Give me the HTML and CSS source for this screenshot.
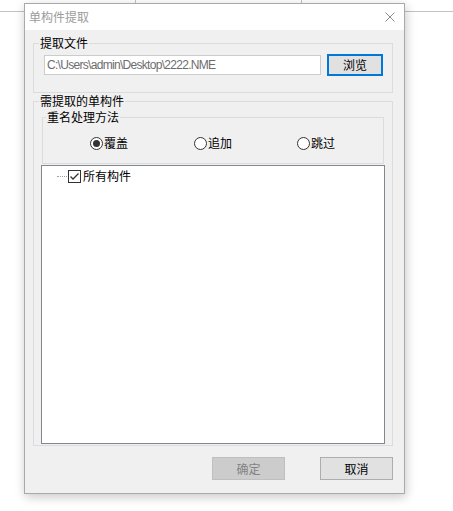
FILE: index.html
```html
<!DOCTYPE html>
<html lang="zh-CN">
<head>
<meta charset="utf-8">
<title>单构件提取</title>
<link rel="stylesheet" href="styles.css">
</head>
<body>
<div class="desk-line hline hl-left"></div>
<div class="desk-line hline hl-right"></div>
<div class="desk-line vline vl-1"></div>
<div class="desk-line vline vl-2"></div>

<div class="dialog">
  <div class="titlebar">
    <span class="title">单构件提取</span>
    <svg class="close" width="10" height="10" viewBox="0 0 10 10">
      <path d="M0.5 0.5 L9.5 9.5 M9.5 0.5 L0.5 9.5" stroke="#8c8c8c" stroke-width="1" fill="none"/>
    </svg>
  </div>
  <div class="content">
    <fieldset class="group g1">
      <legend>提取文件</legend>
      <div class="file-row">
        <div class="path">C:\Users\admin\Desktop\2222.NME</div>
        <button class="btn btn-focus">浏览</button>
      </div>
    </fieldset>

    <fieldset class="group g2">
      <legend>需提取的单构件</legend>
      <fieldset class="group g3">
        <legend>重名处理方法</legend>
        <div class="radios">
          <div class="radio">
            <svg width="13" height="13" viewBox="0 0 13 13"><circle cx="6.5" cy="6.5" r="6" fill="#fff" stroke="#333"/><circle cx="6.5" cy="6.5" r="3.5" fill="#333"/></svg>
            <span>覆盖</span>
          </div>
          <div class="radio">
            <svg width="13" height="13" viewBox="0 0 13 13"><circle cx="6.5" cy="6.5" r="6" fill="#fff" stroke="#333"/></svg>
            <span>追加</span>
          </div>
          <div class="radio">
            <svg width="13" height="13" viewBox="0 0 13 13"><circle cx="6.5" cy="6.5" r="6" fill="#fff" stroke="#333"/></svg>
            <span>跳过</span>
          </div>
        </div>
      </fieldset>
      <div class="tree">
        <div class="tree-item">
          <span class="dots"></span>
          <svg class="check" width="13" height="13" viewBox="0 0 13 13"><rect x="0.5" y="0.5" width="12" height="12" fill="#fff" stroke="#333"/><path d="M2.5 6.5 L5 9 L10.5 3.5" fill="none" stroke="#333" stroke-width="1.3"/></svg>
          <span class="label">所有构件</span>
        </div>
      </div>
    </fieldset>

    <div class="actions">
      <button class="btn btn-disabled">确定</button>
      <button class="btn">取消</button>
    </div>
  </div>
</div>
</body>
</html>
```

FILE: styles.css
```css
* { box-sizing: border-box; }

html, body {
  margin: 0;
  padding: 0;
  background: #ffffff;
}

body {
  position: relative;
  width: 453px;
  height: 511px;
  overflow: hidden;
  font-family: "Noto Sans CJK SC", "Noto Sans", sans-serif;
  font-size: 12px;
  color: #000;
}

.desk-line {
  position: absolute;
  background: #c2c2c2;
}
.hline { height: 1px; top: 11px; }
.hl-left { left: 0; width: 24px; }
.hl-right { left: 405px; width: 48px; }
.vline { width: 1px; top: 0; height: 3px; }
.vl-1 { left: 135px; }
.vl-2 { left: 301px; }

.dialog {
  position: relative;
  margin: 3px 0 0 24px;
  width: 381px;
  height: 491px;
  border: 1px solid #a9a9a9;
  background: #f0f0f0;
  box-shadow: 1px 3px 10px rgba(0, 0, 0, 0.22);
  display: flex;
  flex-direction: column;
}

.titlebar {
  height: 26px;
  background: #ffffff;
  display: flex;
  align-items: center;
  justify-content: space-between;
  padding: 0 9px 0 4px;
  flex: none;
}
.title {
  color: #9b9b9b;
  font-size: 12px;
  line-height: 16px;
}
.close { display: block; }

.content {
  padding: 0 11px 0 8px;
  display: flex;
  flex-direction: column;
}

.group {
  margin: 0;
  border: 1px solid #dcdcdc;
  min-width: 0;
}
.group > legend {
  font-size: 12px;
  line-height: 16px;
  padding: 0 1px;
  margin-left: 5px;
}

.g1 {
  margin-top: 5px;
  width: 360px;
  padding: 3px 9px 16px 0;
}
.file-row {
  display: flex;
  align-items: center;
  gap: 6px;
  margin-left: 10px;
}
.path {
  width: 277px;
  height: 20px;
  background: #fff;
  border: 1px solid #cccccc;
  color: #6d6d6d;
  font-family: "Liberation Sans", "Noto Sans CJK SC", sans-serif;
  font-size: 12px;
  letter-spacing: -0.7px;
  line-height: 18px;
  padding-left: 2px;
  white-space: nowrap;
  overflow: hidden;
}

.btn {
  font-family: "Noto Sans CJK SC", sans-serif;
  font-size: 12px;
  line-height: 16px;
  width: 73px;
  height: 23px;
  padding: 0;
  margin: 0;
  border: 1px solid #adadad;
  background: #e1e1e1;
  color: #000;
  text-align: center;
}
.btn-focus {
  width: 56px;
  height: 22px;
  border: 2px solid #0078d7;
}
.btn-disabled {
  background: #cccccc;
  border-color: #bfbfbf;
  color: #838383;
}

.g2 {
  width: 360px;
  padding: 0 7px 1px 0;
}

.g3 {
  margin: 0 1px 0 8px;
  padding: 10px 0 12px 0;
}
.g3 > legend { margin-left: 3px; }

.radios {
  display: grid;
  grid-template-columns: 104px 103px auto;
  height: 16px;
  margin-left: 47px;
}
.radio {
  display: flex;
  align-items: center;
  gap: 1px;
  line-height: 16px;
}
.radio svg { display: block; }

.tree {
  margin: 1px 0 0 7px;
  height: 279px;
  background: #fff;
  border: 1px solid #828790;
  padding: 2px 0 0 15px;
}
.tree-item {
  display: flex;
  align-items: center;
  height: 16px;
}
.dots {
  width: 10px;
  height: 0;
  border-top: 1px dotted #a0a0a0;
  margin-right: 1px;
}
.check { display: block; margin-right: 2px; }
.label { line-height: 16px; }

.actions {
  display: flex;
  justify-content: flex-end;
  gap: 35px;
  margin-top: 11px;
}
```
